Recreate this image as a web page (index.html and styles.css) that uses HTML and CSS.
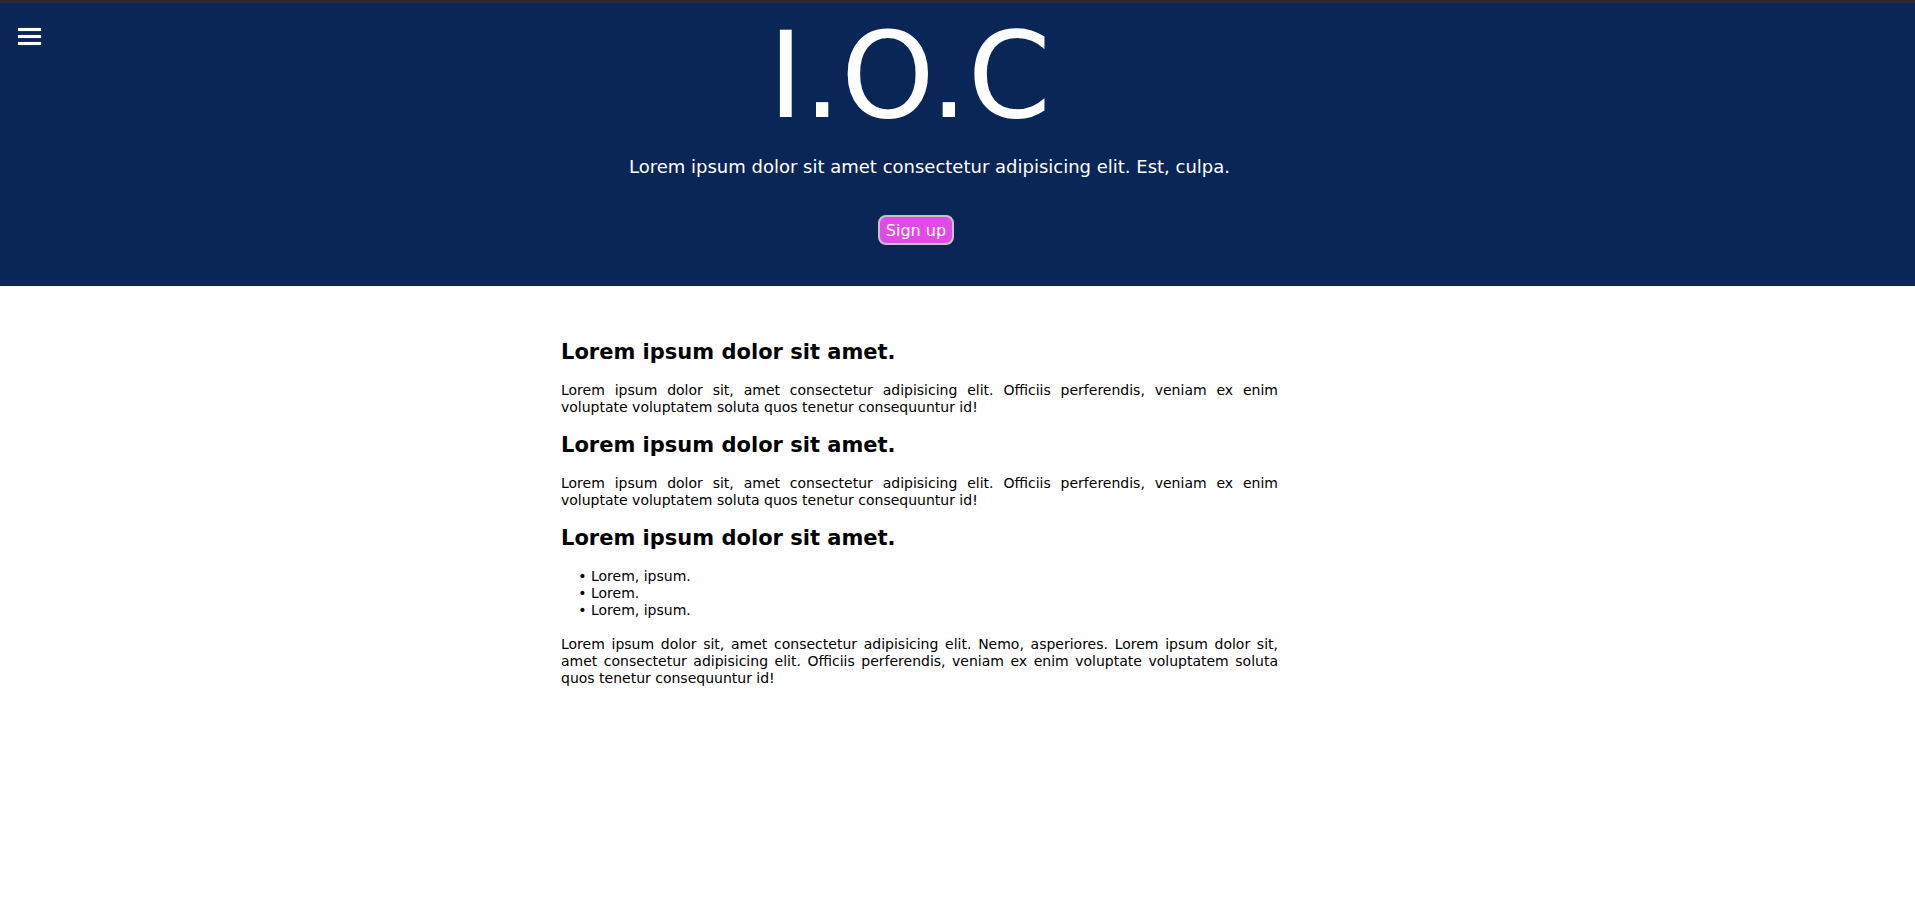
FILE: index.html
```html
<!DOCTYPE html>
<html lang="en">
<head>
<meta charset="utf-8">
<title>I.O.C</title>
<link rel="stylesheet" href="styles.css">
</head>
<body>
<div class="topstrip"></div>
<header class="hero">
  <button class="menu" aria-label="Menu">
    <span class="bar"></span><span class="bar"></span><span class="bar"></span>
  </button>
  <div class="hero-inner">
    <h1 class="title">I.O.C</h1>
    <p class="subtitle">Lorem ipsum dolor sit amet consectetur adipisicing elit. Est, culpa.</p>
    <button class="signup">Sign up</button>
  </div>
</header>
<main class="main">
  <div class="content">
    <h2>Lorem ipsum dolor sit amet.</h2>
    <p>Lorem ipsum dolor sit, amet consectetur adipisicing elit. Officiis perferendis, veniam ex enim voluptate voluptatem soluta quos tenetur consequuntur id!</p>
    <h2>Lorem ipsum dolor sit amet.</h2>
    <p>Lorem ipsum dolor sit, amet consectetur adipisicing elit. Officiis perferendis, veniam ex enim voluptate voluptatem soluta quos tenetur consequuntur id!</p>
    <h2>Lorem ipsum dolor sit amet.</h2>
    <ul>
      <li>Lorem, ipsum.</li>
      <li>Lorem.</li>
      <li>Lorem, ipsum.</li>
    </ul>
    <p>Lorem ipsum dolor sit, amet consectetur adipisicing elit. Nemo, asperiores. Lorem ipsum dolor sit, amet consectetur adipisicing elit. Officiis perferendis, veniam ex enim voluptate voluptatem soluta quos tenetur consequuntur id!</p>
  </div>
</main>
</body>
</html>
```
FILE: styles.css
```css
* { box-sizing: border-box; }
html, body { margin: 0; padding: 0; }
body {
  font-family: "DejaVu Sans", sans-serif;
  font-size: 14px;
  line-height: 17px;
  color: #000;
  background: #fff;
}
.topstrip { height: 3px; background: #2a2a2e; }
.hero {
  position: relative;
  background: #0a2657;
  color: #fff;
  height: 283px;
  padding-top: 4px;
}
.menu {
  position: absolute;
  left: 18px;
  top: 25px;
  width: 23px;
  padding: 0;
  border: 0;
  background: transparent;
  display: flex;
  flex-direction: column;
  gap: 4px;
  cursor: pointer;
}
.bar {
  display: block;
  height: 3px;
  width: 23px;
  background: #fff;
  box-shadow: 0 0 1px rgba(200,200,220,0.8);
}
.hero-inner {
  display: flex;
  flex-direction: column;
  align-items: center;
  padding-right: 76px;
}
.title {
  margin: 0;
  padding-right: 20px;
  font-size: 119px;
  font-weight: 400;
  line-height: normal;
}
.subtitle {
  margin: 11px 0 0;
  font-size: 18px;
  line-height: normal;
  padding-left: 20px;
}
.signup {
  margin-top: 38px;
  margin-right: 7px;
  font-family: "DejaVu Sans", sans-serif;
  font-size: 16px;
  line-height: normal;
  color: #fff;
  background: #e24ae6;
  border: 2px solid #c4c4c8;
  border-radius: 8px;
  padding: 3px 6px;
  height: 30px;
}
.main { padding: 37px 76px 40px 0; }
.content { width: 717px; margin: 0 auto; }
.content h2 { font-size: 21px; line-height: normal; font-weight: 700; margin: 0.83em 0; }
.content p { margin: 14px 0; text-align: justify; }
.content ul { margin: 14px 0 17px; padding-left: 30px; }
.content li::marker { content: "\2022  "; }
```
